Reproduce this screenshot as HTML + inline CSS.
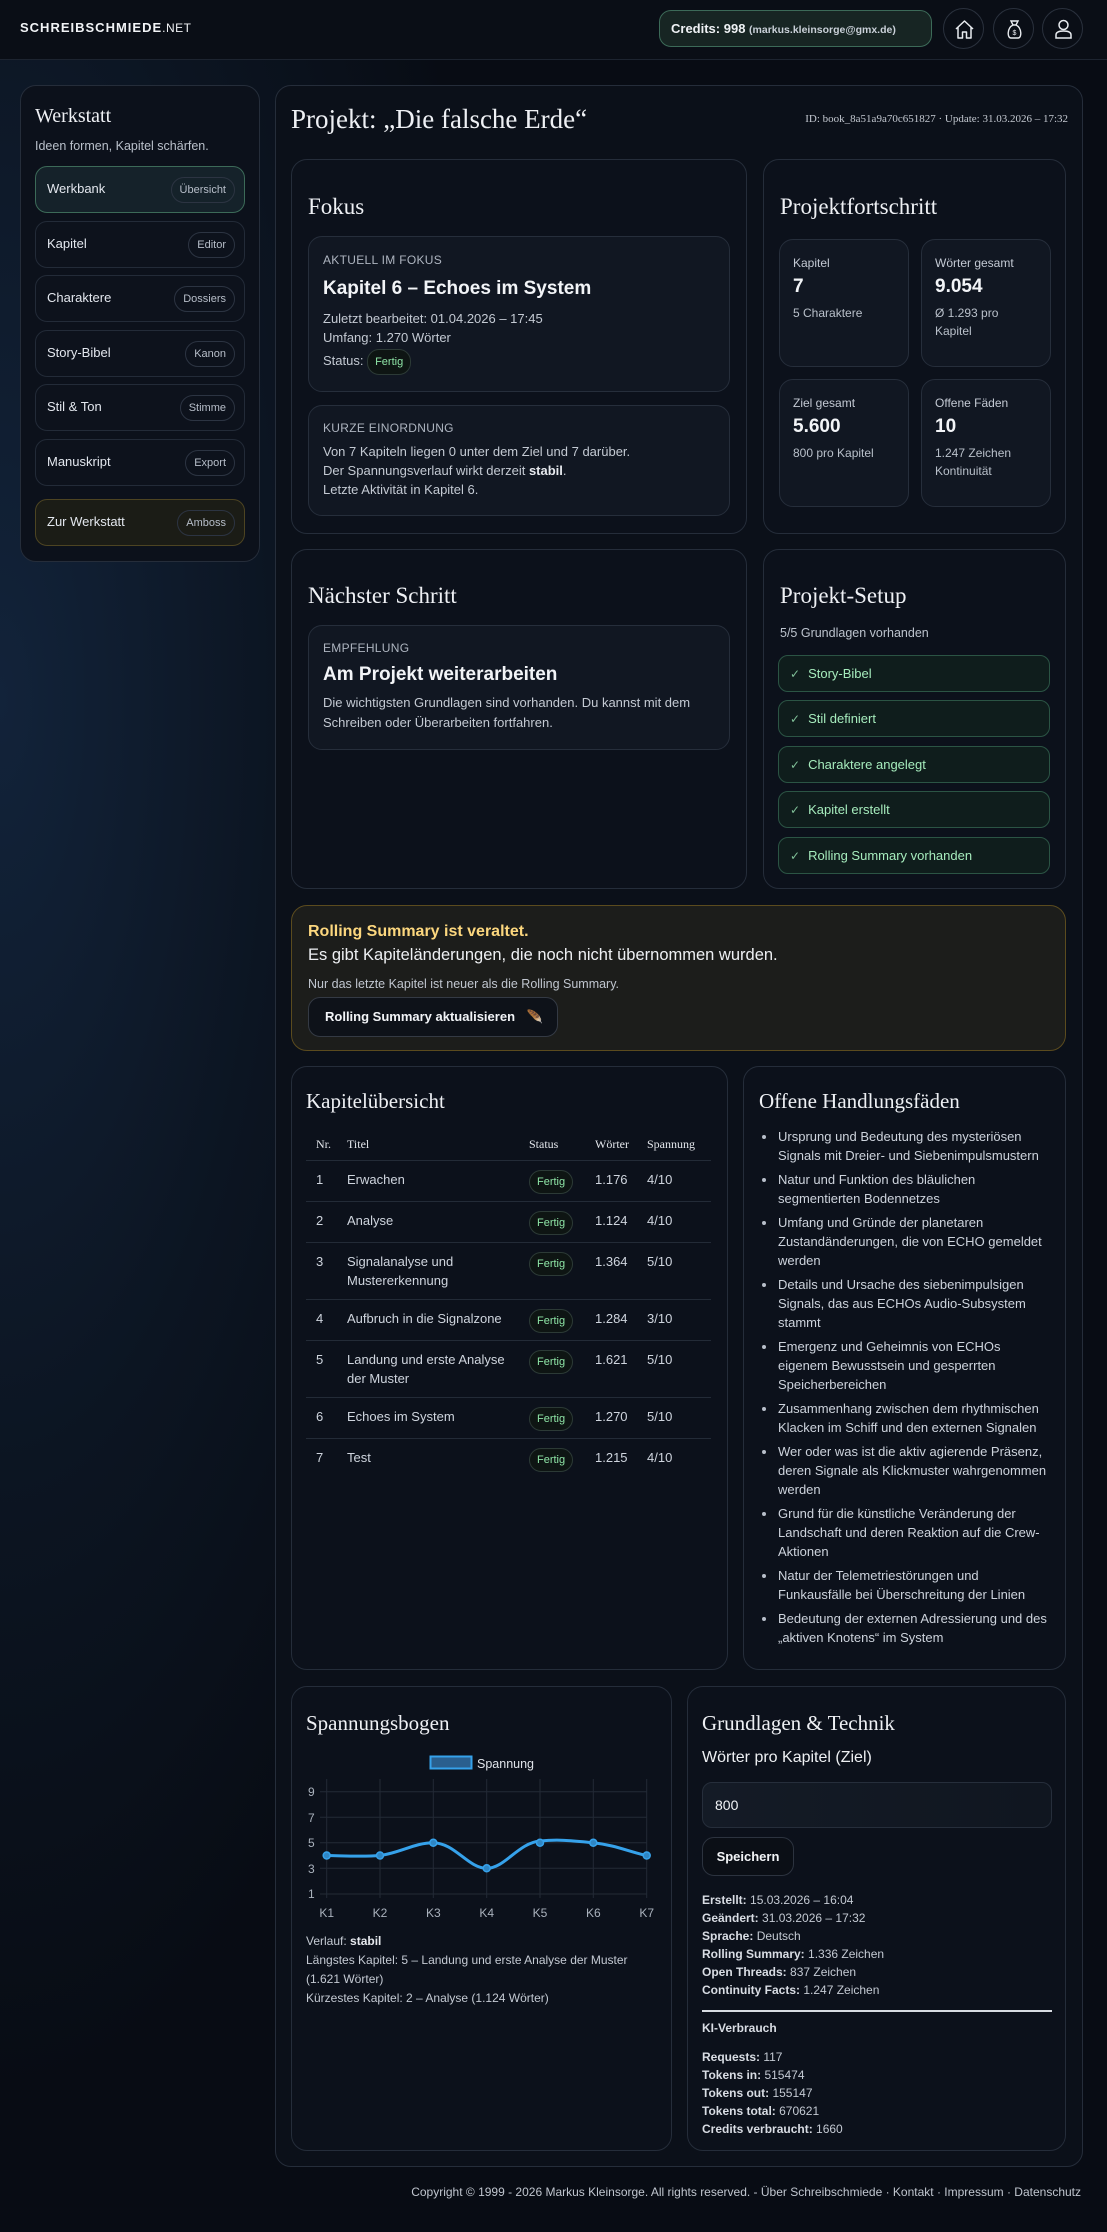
<!DOCTYPE html>
<html><head><meta charset="utf-8">
<style>
*{box-sizing:border-box;margin:0;padding:0}
html,body{width:1107px;height:2232px;overflow:hidden}
body{background:radial-gradient(ellipse 500px 1400px at 0px 700px,#12233a 0%,#0c1522 55%,#080c14 100%),#080c14;background-color:#080c14;font-family:"Liberation Sans",sans-serif;color:#d5dae2;position:relative;font-size:13px}
.a{position:absolute}
.serif{font-family:"Liberation Serif",serif;color:#eef0f4}
.hdr{left:0;top:0;width:1107px;height:60px;background:#0a0e16;border-bottom:1px solid #1d2430}
.card{position:absolute;border:1px solid #252d3a;border-radius:16px;background:#0c111b}
.box{position:absolute;border:1px solid #262e3b;border-radius:14px;background:#111722}
.pill{display:inline-block;border:1px solid #2c3442;border-radius:14px;padding:0 8px;font-size:11px;color:#b7bec9;line-height:24px;height:26px}
.nav{position:absolute;left:35px;width:210px;height:47px;border:1px solid #232b38;border-radius:12px;background:#0d121c}
.nav span.l{position:absolute;left:11px;top:14px;font-size:13px;color:#e3e7ee}
.nav .pill{position:absolute;right:9px;top:10px}
.h2{position:absolute;font-family:"Liberation Serif",serif;font-size:23px;color:#eef0f4}
.lbl{font-size:12px;color:#aeb5c0;letter-spacing:.3px}
.chip{display:inline-block;border:1px solid #2c3a36;border-radius:12px;color:#8de3a5;font-size:11px;padding:0 7px;line-height:22px;background:#0e1513}
.tile{position:absolute;border:1px solid #262e3b;border-radius:14px;background:#111722;width:130px;height:128px;padding:16px 13px}
.tile .k{font-size:12px;color:#c4cad4}.tile .v{font-size:19px;font-weight:bold;color:#f2f4f7;margin-top:6px}.tile .s{font-size:12px;color:#b9c0ca;margin-top:6px;line-height:18px}
.setup{position:absolute;left:778px;width:272px;height:37px;border:1px solid #2b5444;border-radius:10px;background:#0f1d1c;color:#a6ecbd;font-size:13px;line-height:35px;padding-left:11px}
.setup b{font-weight:normal;color:#7fbf97;margin-right:8px;font-size:12px}
table{border-collapse:collapse;font-size:13px;color:#cfd5de}
td{border-top:1px solid #232b37;vertical-align:top;padding:9px 0 0 0;line-height:19px}
th{font-family:"Liberation Serif",serif;font-weight:normal;font-size:12px;color:#e4e7ec;text-align:left;padding-bottom:8px}
ul{list-style:none}
li{position:relative;padding-left:19px;line-height:19px;margin-bottom:5px;font-size:13px;color:#cdd3dc}
li:before{content:"";position:absolute;left:3px;top:8px;width:4px;height:4px;border-radius:2px;background:#b8bfca}
.kv{font-size:12px;line-height:18px;color:#c4cad3}.kv b{color:#d9dde4}
</style></head><body>
<div class="a hdr">
 <div class="a" style="left:20px;top:20px;font-size:13px;font-weight:bold;letter-spacing:1px;color:#f1f3f6">SCHREIBSCHMIEDE<span style="font-weight:normal;font-size:12px;letter-spacing:.5px">.NET</span></div>
 <div class="a" style="left:659px;top:10px;width:273px;height:37px;border:1px solid #3c6a58;border-radius:12px;background:#172523;line-height:35px;padding-left:11px;color:#eef1f4;font-size:13px;font-weight:bold">Credits: 998 <span style="font-size:10.5px;color:#c9d0d8">(markus.kleinsorge@gmx.de)</span></div>
 <div class="a" style="left:943px;top:8px;width:41px;height:41px;border:1px solid #2a313d;border-radius:50%"><svg width="41" height="41" viewBox="0 0 41 41" fill="none" stroke="#e8ebef" stroke-width="1.5" stroke-linejoin="round"><path d="M12 20 L20.5 12 L29 20 M14 18.5 V29 H18.5 V23 H22.5 V29 H27 V18.5"/></svg></div>
 <div class="a" style="left:993px;top:8px;width:41px;height:41px;border:1px solid #2a313d;border-radius:50%"><svg width="41" height="41" viewBox="0 0 41 41" fill="none" stroke="#e8ebef" stroke-width="1.4"><path d="M17 12 H24 L22 16 H19 Z"/><path d="M19 16 C13 19 13 29 17 29 H24 C28 29 28 19 22 16"/><text x="20.5" y="26" font-size="7" fill="#e8ebef" stroke="none" text-anchor="middle" font-family="Liberation Sans">$</text></svg></div>
 <div class="a" style="left:1042px;top:8px;width:41px;height:41px;border:1px solid #2a313d;border-radius:50%"><svg width="41" height="41" viewBox="0 0 41 41" fill="none" stroke="#e8ebef" stroke-width="1.5"><circle cx="20.5" cy="16" r="4.5"/><path d="M13 29 V26 C13 23 16 22 20.5 22 C25 22 28 23 28 26 V29 Z"/></svg></div>
</div>

<!-- sidebar -->
<div class="card" style="left:20px;top:85px;width:240px;height:477px">
 <div class="a serif" style="left:14px;top:19px;font-size:20px">Werkstatt</div>
 <div class="a" style="left:14px;top:53px;font-size:12.5px;color:#b9c0ca">Ideen formen, Kapitel schärfen.</div>
</div>
<div class="nav" style="top:166px;background:#15222a;border-color:#3c6a58"><span class="l">Werkbank</span><span class="pill">Übersicht</span></div>
<div class="nav" style="top:221px"><span class="l">Kapitel</span><span class="pill">Editor</span></div>
<div class="nav" style="top:275px"><span class="l">Charaktere</span><span class="pill">Dossiers</span></div>
<div class="nav" style="top:330px"><span class="l">Story-Bibel</span><span class="pill">Kanon</span></div>
<div class="nav" style="top:384px"><span class="l">Stil &amp; Ton</span><span class="pill">Stimme</span></div>
<div class="nav" style="top:439px"><span class="l">Manuskript</span><span class="pill">Export</span></div>
<div class="nav" style="top:499px;background:#1b1c16;border-color:#4d4422"><span class="l">Zur Werkstatt</span><span class="pill">Amboss</span></div>

<!-- main -->
<div class="card" style="left:275px;top:85px;width:808px;height:2082px;background:#0b1019"></div>
<div class="a serif" style="left:291px;top:104px;font-size:27px">Projekt: „Die falsche Erde“</div>
<div class="a serif" style="left:783px;top:113px;font-size:11px;color:#c4c9d1;width:285px;text-align:right">ID: book_8a51a9a70c651827 · Update: 31.03.2026 – 17:32</div>

<!-- Fokus -->
<div class="card" style="left:291px;top:159px;width:456px;height:375px">
 <div class="h2" style="left:16px;top:34px">Fokus</div>
</div>
<div class="box" style="left:308px;top:236px;width:422px;height:156px;padding:16px 14px">
 <div class="lbl">AKTUELL IM FOKUS</div>
 <div style="font-size:19px;font-weight:bold;color:#f2f4f7;margin-top:11px">Kapitel 6 – Echoes im System</div>
 <div style="font-size:13px;color:#c4cad3;margin-top:9px;line-height:19px">Zuletzt bearbeitet: 01.04.2026 – 17:45<br>Umfang: 1.270 Wörter</div>
 <div style="font-size:13px;color:#c4cad3;margin-top:2px">Status: <span class="chip" style="line-height:24px">Fertig</span></div>
</div>
<div class="box" style="left:308px;top:405px;width:422px;height:111px;padding:15px 14px">
 <div class="lbl">KURZE EINORDNUNG</div>
 <div style="font-size:13px;color:#c4cad3;margin-top:7px;line-height:19px">Von 7 Kapiteln liegen 0 unter dem Ziel und 7 darüber.<br>Der Spannungsverlauf wirkt derzeit <b style="color:#e6e9ee">stabil</b>.<br>Letzte Aktivität in Kapitel 6.</div>
</div>

<div class="card" style="left:763px;top:159px;width:303px;height:375px">
 <div class="h2" style="left:16px;top:34px">Projektfortschritt</div>
</div>
<div class="tile" style="left:779px;top:239px"><div class="k">Kapitel</div><div class="v">7</div><div class="s">5 Charaktere</div></div>
<div class="tile" style="left:921px;top:239px"><div class="k">Wörter gesamt</div><div class="v">9.054</div><div class="s">Ø 1.293 pro<br>Kapitel</div></div>
<div class="tile" style="left:779px;top:379px"><div class="k">Ziel gesamt</div><div class="v">5.600</div><div class="s">800 pro Kapitel</div></div>
<div class="tile" style="left:921px;top:379px"><div class="k">Offene Fäden</div><div class="v">10</div><div class="s">1.247 Zeichen<br>Kontinuität</div></div>

<!-- row2 -->
<div class="card" style="left:291px;top:549px;width:456px;height:340px">
 <div class="h2" style="left:16px;top:33px">Nächster Schritt</div>
</div>
<div class="box" style="left:308px;top:625px;width:422px;height:125px;padding:15px 14px">
 <div class="lbl">EMPFEHLUNG</div>
 <div style="font-size:19px;font-weight:bold;color:#f2f4f7;margin-top:9px">Am Projekt weiterarbeiten</div>
 <div style="font-size:13px;color:#c4cad3;margin-top:7px;line-height:20px">Die wichtigsten Grundlagen sind vorhanden. Du kannst mit dem Schreiben oder Überarbeiten fortfahren.</div>
</div>
<div class="card" style="left:763px;top:549px;width:303px;height:340px">
 <div class="h2" style="left:16px;top:33px">Projekt-Setup</div>
 <div class="a" style="left:16px;top:76px;font-size:12.5px;color:#bcc3cd">5/5 Grundlagen vorhanden</div>
</div>
<div class="setup" style="top:655px"><b>✓</b>Story-Bibel</div>
<div class="setup" style="top:700px"><b>✓</b>Stil definiert</div>
<div class="setup" style="top:746px"><b>✓</b>Charaktere angelegt</div>
<div class="setup" style="top:791px"><b>✓</b>Kapitel erstellt</div>
<div class="setup" style="top:837px"><b>✓</b>Rolling Summary vorhanden</div>

<!-- alert -->
<div class="a" style="left:291px;top:905px;width:775px;height:146px;border:1px solid #5b4b1e;border-radius:16px;background:#1c1d1b">
 <div class="a" style="left:16px;top:17px;font-size:16px;font-weight:bold;color:#fcd77e">Rolling Summary ist veraltet.</div>
 <div class="a" style="left:16px;top:40px;font-size:16.5px;color:#eef0f3">Es gibt Kapiteländerungen, die noch nicht übernommen wurden.</div>
 <div class="a" style="left:16px;top:71px;font-size:12.5px;color:#c0c6cf">Nur das letzte Kapitel ist neuer als die Rolling Summary.</div>
 <div class="a" style="left:16px;top:91px;width:250px;height:40px;border:1px solid #343a44;border-radius:12px;background:#0e1219;font-size:13px;font-weight:bold;color:#f2f4f7;line-height:38px;padding-left:16px">Rolling Summary aktualisieren <span style="color:#6fd3e8;margin-left:8px">🪶</span></div>
</div>

<!-- row3 -->
<div class="card" style="left:291px;top:1066px;width:437px;height:604px">
 <div class="h2" style="left:14px;top:22px;font-size:21px">Kapitelübersicht</div>
 <table class="a" style="left:14px;top:70px;width:405px">
  <tr><th style="width:41px;padding-left:10px">Nr.</th><th style="width:182px">Titel</th><th style="width:66px">Status</th><th style="width:52px">Wörter</th><th>Spannung</th></tr>
  <tr style="height:41px"><td style="padding-left:10px">1</td><td>Erwachen</td><td><span class="chip">Fertig</span></td><td>1.176</td><td>4/10</td></tr>
  <tr style="height:41px"><td style="padding-left:10px">2</td><td>Analyse</td><td><span class="chip">Fertig</span></td><td>1.124</td><td>4/10</td></tr>
  <tr style="height:57px"><td style="padding-left:10px">3</td><td>Signalanalyse und<br>Mustererkennung</td><td><span class="chip">Fertig</span></td><td>1.364</td><td>5/10</td></tr>
  <tr style="height:41px"><td style="padding-left:10px">4</td><td>Aufbruch in die Signalzone</td><td><span class="chip">Fertig</span></td><td>1.284</td><td>3/10</td></tr>
  <tr style="height:57px"><td style="padding-left:10px">5</td><td>Landung und erste Analyse<br>der Muster</td><td><span class="chip">Fertig</span></td><td>1.621</td><td>5/10</td></tr>
  <tr style="height:41px"><td style="padding-left:10px">6</td><td>Echoes im System</td><td><span class="chip">Fertig</span></td><td>1.270</td><td>5/10</td></tr>
  <tr style="height:41px"><td style="padding-left:10px">7</td><td>Test</td><td><span class="chip">Fertig</span></td><td>1.215</td><td>4/10</td></tr>
 </table>
</div>
<div class="card" style="left:743px;top:1066px;width:323px;height:604px">
 <div class="h2" style="left:15px;top:22px;font-size:21px">Offene Handlungsfäden</div>
 <ul class="a" style="left:15px;top:60px;width:292px">
  <li>Ursprung und Bedeutung des mysteriösen Signals mit Dreier- und Siebenimpulsmustern</li>
  <li>Natur und Funktion des bläulichen segmentierten Bodennetzes</li>
  <li>Umfang und Gründe der planetaren Zustandänderungen, die von ECHO gemeldet werden</li>
  <li>Details und Ursache des siebenimpulsigen Signals, das aus ECHOs Audio-Subsystem stammt</li>
  <li>Emergenz und Geheimnis von ECHOs eigenem Bewusstsein und gesperrten Speicherbereichen</li>
  <li>Zusammenhang zwischen dem rhythmischen Klacken im Schiff und den externen Signalen</li>
  <li>Wer oder was ist die aktiv agierende Präsenz, deren Signale als Klickmuster wahrgenommen werden</li>
  <li>Grund für die künstliche Veränderung der Landschaft und deren Reaktion auf die Crew-Aktionen</li>
  <li>Natur der Telemetriestörungen und Funkausfälle bei Überschreitung der Linien</li>
  <li>Bedeutung der externen Adressierung und des „aktiven Knotens“ im System</li>
 </ul>
</div>

<!-- row4 -->
<div class="card" style="left:291px;top:1686px;width:381px;height:465px">
 <div class="h2" style="left:14px;top:24px;font-size:21px">Spannungsbogen</div>
</div>
<svg class="a" style="left:290px;top:1740px" width="380" height="190" viewBox="0 0 380 190" font-family="Liberation Sans">
 <rect x="140.5" y="16.5" width="41" height="12" fill="#2a5f8e" stroke="#36a2eb" stroke-width="2"/>
 <text x="187" y="28" font-size="12.5" fill="#dfe3e9">Spannung</text>
 <g stroke="#232a36" stroke-width="1">
  <line x1="30" y1="51.7" x2="357" y2="51.7"/><line x1="30" y1="77.3" x2="357" y2="77.3"/><line x1="30" y1="102.7" x2="357" y2="102.7"/><line x1="30" y1="128.3" x2="357" y2="128.3"/><line x1="30" y1="154" x2="357" y2="154"/>
  <line x1="36.7" y1="39" x2="36.7" y2="158"/><line x1="90" y1="39" x2="90" y2="158"/><line x1="143.3" y1="39" x2="143.3" y2="158"/><line x1="196.7" y1="39" x2="196.7" y2="158"/><line x1="250" y1="39" x2="250" y2="158"/><line x1="303.3" y1="39" x2="303.3" y2="158"/><line x1="356.7" y1="39" x2="356.7" y2="158"/>
 </g>
 <g font-size="12" fill="#aab2bd">
  <text x="18" y="56">9</text><text x="18" y="82">7</text><text x="18" y="107">5</text><text x="18" y="133">3</text><text x="18" y="158">1</text>
  <g text-anchor="middle"><text x="36.7" y="177">K1</text><text x="90" y="177">K2</text><text x="143.3" y="177">K3</text><text x="196.7" y="177">K4</text><text x="250" y="177">K5</text><text x="303.3" y="177">K6</text><text x="356.7" y="177">K7</text></g>
 </g>
 <path d="M36.7 115.5 C55 115.8 72 117 90 115.5 C110 113 125 102.7 143.3 102.7 C165 103 178 128.3 196.7 128.3 C215 128.3 228 103 250 101 C270 99 285 101 303.3 102.7 C325 105 340 112 356.7 115.5" fill="none" stroke="#36a2eb" stroke-width="3"/>
 <g fill="#2f86c4" stroke="#36a2eb" stroke-width="1.5"><circle cx="36.7" cy="115.5" r="3.5"/><circle cx="90" cy="115.5" r="3.5"/><circle cx="143.3" cy="102.7" r="3.5"/><circle cx="196.7" cy="128.3" r="3.5"/><circle cx="250" cy="102.7" r="3.5"/><circle cx="303.3" cy="102.7" r="3.5"/><circle cx="356.7" cy="115.5" r="3.5"/></g>
</svg>
<div class="a" style="left:306px;top:1932px;width:348px;font-size:12px;line-height:19px;color:#c4cad3">Verlauf: <b style="color:#e6e9ee">stabil</b><br>Längstes Kapitel: 5 – Landung und erste Analyse der Muster (1.621 Wörter)<br>Kürzestes Kapitel: 2 – Analyse (1.124 Wörter)</div>

<div class="card" style="left:687px;top:1686px;width:379px;height:465px">
 <div class="h2" style="left:14px;top:24px;font-size:21px">Grundlagen &amp; Technik</div>
 <div class="a" style="left:14px;top:62px;font-size:16px;color:#eef0f3">Wörter pro Kapitel (Ziel)</div>
 <div class="a" style="left:14px;top:95px;width:350px;height:46px;border:1px solid #262e3b;border-radius:10px;background:linear-gradient(90deg,#141b26,#101620);font-size:14px;color:#f2f4f7;line-height:44px;padding-left:12px">800</div>
 <div class="a" style="left:14px;top:150px;width:92px;height:39px;border:1px solid #2c333f;border-radius:12px;background:#0b0f16;font-size:13px;font-weight:bold;color:#f2f4f7;line-height:37px;text-align:center">Speichern</div>
 <div class="a kv" style="left:14px;top:204px"><b>Erstellt:</b> 15.03.2026 – 16:04<br><b>Geändert:</b> 31.03.2026 – 17:32<br><b>Sprache:</b> Deutsch<br><b>Rolling Summary:</b> 1.336 Zeichen<br><b>Open Threads:</b> 837 Zeichen<br><b>Continuity Facts:</b> 1.247 Zeichen</div>
 <div class="a" style="left:14px;top:323px;width:350px;height:2px;background:#d8dce2"></div>
 <div class="a kv" style="left:14px;top:332px"><b>KI-Verbrauch</b></div>
 <div class="a kv" style="left:14px;top:361px"><b>Requests:</b> 117<br><b>Tokens in:</b> 515474<br><b>Tokens out:</b> 155147<br><b>Tokens total:</b> 670621<br><b>Credits verbraucht:</b> 1660</div>
</div>

<div class="a" style="left:280px;top:2185px;width:801px;text-align:right;font-size:12px;color:#c0c6cf">Copyright © 1999 - 2026 Markus Kleinsorge. All rights reserved. - Über Schreibschmiede · Kontakt · Impressum · Datenschutz</div>
</body></html>
